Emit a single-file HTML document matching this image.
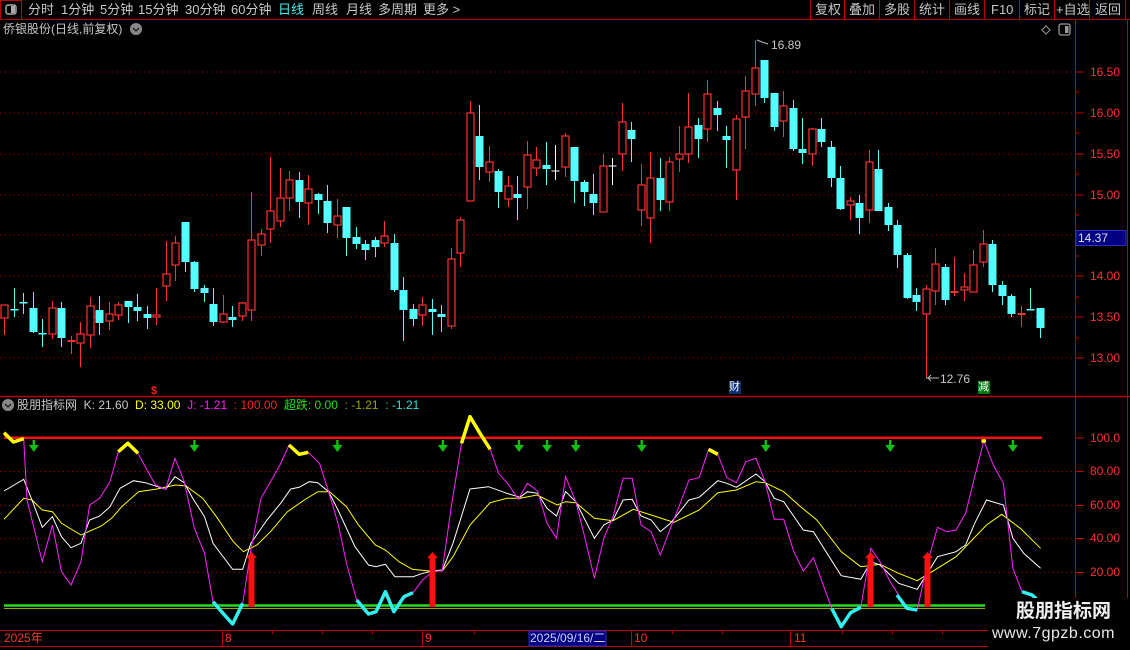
<!DOCTYPE html>
<html><head><meta charset="utf-8"><style>
html,body{margin:0;padding:0;background:#000;width:1130px;height:650px;overflow:hidden}
body{position:relative;font-family:"Liberation Sans","Noto Sans CJK SC",sans-serif}
.t{position:absolute;white-space:nowrap;font-size:13px;color:#c8c8c8;line-height:16px}
svg{position:absolute;left:0;top:0}
</style></head><body>
<svg id="s" width="1130" height="650" xmlns="http://www.w3.org/2000/svg">
<line x1="0" y1="19.5" x2="1130" y2="19.5" stroke="#c00000"/>
<rect x="0.5" y="0.5" width="21" height="19" fill="none" stroke="#c00000"/>
<rect x="6" y="5" width="10" height="9" rx="2" fill="none" stroke="#aaa" stroke-width="1.4"/>
<rect x="11" y="6" width="4" height="7" fill="#aaa"/>
<g stroke="#c00000">
<line x1="810.5" y1="0" x2="810.5" y2="19"/><line x1="844.5" y1="0" x2="844.5" y2="19"/><line x1="879.5" y1="0" x2="879.5" y2="19"/><line x1="914.5" y1="0" x2="914.5" y2="19"/><line x1="949.5" y1="0" x2="949.5" y2="19"/><line x1="984.5" y1="0" x2="984.5" y2="19"/><line x1="1019.5" y1="0" x2="1019.5" y2="19"/><line x1="1054.5" y1="0" x2="1054.5" y2="19"/><line x1="1089.5" y1="0" x2="1089.5" y2="19"/><line x1="1125.5" y1="0" x2="1125.5" y2="19"/>
</g>
<line x1="1075.5" y1="20" x2="1075.5" y2="630" stroke="#c00000"/>
<line x1="1127.5" y1="20" x2="1127.5" y2="630" stroke="#c00000"/>
<line x1="0" y1="396.5" x2="1130" y2="396.5" stroke="#c00000" stroke-width="1.5"/>
<g stroke="#c00000" stroke-dasharray="1,3.5">
<line x1="0" y1="72" x2="1075" y2="72"/><line x1="0" y1="113" x2="1075" y2="113"/><line x1="0" y1="154" x2="1075" y2="154"/><line x1="0" y1="195" x2="1075" y2="195"/><line x1="0" y1="235" x2="1075" y2="235"/><line x1="0" y1="276" x2="1075" y2="276"/><line x1="0" y1="317" x2="1075" y2="317"/><line x1="0" y1="358" x2="1075" y2="358"/>
<line x1="0" y1="471.5" x2="1075" y2="471.5"/><line x1="0" y1="505.5" x2="1075" y2="505.5"/><line x1="0" y1="538.5" x2="1075" y2="538.5"/><line x1="0" y1="572.5" x2="1075" y2="572.5"/>
</g>
<g stroke="#c00000">
<line x1="1075" y1="72" x2="1084" y2="72"/><line x1="1075" y1="113" x2="1084" y2="113"/><line x1="1075" y1="154" x2="1084" y2="154"/><line x1="1075" y1="195" x2="1084" y2="195"/><line x1="1075" y1="276" x2="1084" y2="276"/><line x1="1075" y1="317" x2="1084" y2="317"/><line x1="1075" y1="358" x2="1084" y2="358"/>
<line x1="1075" y1="92" x2="1079" y2="92"/><line x1="1075" y1="133" x2="1079" y2="133"/><line x1="1075" y1="174" x2="1079" y2="174"/><line x1="1075" y1="215" x2="1079" y2="215"/><line x1="1075" y1="256" x2="1079" y2="256"/><line x1="1075" y1="297" x2="1079" y2="297"/><line x1="1075" y1="338" x2="1079" y2="338"/>
<line x1="1075" y1="438" x2="1084" y2="438"/><line x1="1075" y1="471.5" x2="1084" y2="471.5"/><line x1="1075" y1="505.5" x2="1084" y2="505.5"/><line x1="1075" y1="538.5" x2="1084" y2="538.5"/><line x1="1075" y1="572.5" x2="1084" y2="572.5"/>
</g>
<rect x="1076" y="230.5" width="50" height="15" fill="#000080" stroke="#3030c0"/>
<line x1="0" y1="630.5" x2="1075" y2="630.5" stroke="#c00000"/>
<line x1="0" y1="646.5" x2="1075" y2="646.5" stroke="#c00000"/>
<g stroke="#c00000"><line x1="222.5" y1="630" x2="222.5" y2="646"/><line x1="422.5" y1="630" x2="422.5" y2="646"/><line x1="631.5" y1="630" x2="631.5" y2="646"/><line x1="790.5" y1="630" x2="790.5" y2="646"/>
<line x1="272.5" y1="630" x2="272.5" y2="634"/><line x1="322.5" y1="630" x2="322.5" y2="634"/><line x1="372.5" y1="630" x2="372.5" y2="634"/><line x1="474.5" y1="630" x2="474.5" y2="634"/><line x1="672.5" y1="630" x2="672.5" y2="634"/><line x1="722.5" y1="630" x2="722.5" y2="634"/><line x1="842.5" y1="630" x2="842.5" y2="634"/><line x1="892.5" y1="630" x2="892.5" y2="634"/><line x1="942.5" y1="630" x2="942.5" y2="634"/></g>
<rect x="529" y="631" width="77" height="15" fill="#000080" stroke="#3030c0"/>
<g id="candles"></g>
<polyline points="757,40 762,42 768,44" fill="none" stroke="#bbb"/>
<line x1="926" y1="378" x2="939" y2="378" stroke="#bbb"/>
<polyline points="931,375 928,378 931,381" fill="none" stroke="#bbb"/>
<text x="151" y="394" fill="#ff2020" font-size="11" font-weight="bold" font-family="Liberation Sans">$</text>
<rect x="729" y="381" width="12" height="13" fill="#0a3070"/>
<rect x="978" y="381" width="12" height="13" fill="#0a7a10"/>
<line x1="4" y1="437.7" x2="1042" y2="437.7" stroke="#ff1010" stroke-width="2.5"/>
<line x1="4" y1="605.5" x2="985" y2="605.5" stroke="#20e020" stroke-width="2.5"/>
<line x1="4" y1="608.5" x2="985" y2="608.5" stroke="#a0a000" stroke-width="1"/>
<polyline fill="none" stroke="#ffff00" stroke-width="1" points="4,519.3 23.7,498.3 32,500 42.3,510 52.4,511.7 61.5,523.3 81,535 101.4,526 111.6,518.3 121.7,506.7 138.6,491.7 155.5,489.3 175.8,485 186,486 202.8,498.3 216.4,516.7 233.3,541.7 243.4,551.7 257,545 270.5,531.7 287.4,511.7 304.3,500 317.8,491.7 329.6,491.7 346.5,506.7 358.4,525 375.3,545 385.4,550 399,561.7 412.4,569.3 429.3,571 443,570 453,556.7 470,525 490.2,502.7 507,498.3 520,498.3 537,495 557.2,505 565.6,501.7 575.8,502.7 594.4,518.3 613,520.7 633.3,509.3 651.2,515 673.8,522.3 699.2,510 717.8,492.7 736.4,490 756,481.7 765.1,482.7 783.7,491.7 800.6,506.7 816.8,520 841.2,551.7 860.8,566.7 880,564.3 898.6,573.3 917.2,580.7 937.5,568.3 956.1,556.7 986.5,525 1001.7,514.3 1020.3,528.3 1040.6,548.3"/>
<polyline fill="none" stroke="#ffffff" stroke-width="1" points="4,491 23.7,479.3 32,500 42.3,527.3 52.4,516.7 61.5,536.7 71,547.7 81,543.3 89.6,520 99.7,516 110,506.7 120,488.3 133.5,480.7 145.4,482.7 165.6,489.3 175,476.7 184.2,482.7 192.7,498.3 204.5,516.7 213,543.3 232.6,569.3 242.7,569.3 250.8,543.3 267,520 280.6,503.3 290.7,489 299.2,487.3 309.3,481.7 317.8,482.7 328.6,491.7 338,510 355,546.7 368.5,565 376,566.7 385.4,564.3 394.9,576.7 413,576.7 422.6,573.3 432.7,571 442.2,570.7 453,543.3 470,489 488.5,486.7 507,493.3 520,497.3 527.4,491.7 537.6,493.3 547,508.3 556.5,516 565.6,491.7 575.8,501.7 594.4,538.3 603.8,525 613,520 623.1,500 632.2,499.3 641,516 651.2,520 660.3,531.7 670.4,523.3 689,500 699.2,497.3 717.8,480.7 726.9,483.3 736.4,487.3 756,474 765.1,481.7 774.2,498.3 783.7,501.7 803.3,530 813.4,531.7 841.2,575.7 860.8,579.3 870.9,561.7 880,565 898.6,583.3 917.2,589.3 927.4,573.3 937.5,556.7 956.1,551.7 965.6,545 974.7,523.3 986.5,500 1003.4,505 1012.9,538.3 1023.7,553.3 1040.6,568.3"/>
<polyline fill="none" stroke="#ff20ff" stroke-width="1" points="4,432.7 13.5,442 23.7,438.7 27,500 42.3,561.7 52.4,525 61.5,571.7 71,585 81,561.7 89.6,505 99.7,498.3 110,481.7 118.3,451.7 127.8,443.3 138,453.3 147,470 155.5,485 165.6,489.3 175,458.3 184.2,481.7 194.4,528.3 204.5,553.3 213,601.7 223,613.3 232.6,624 242.7,603.3 250.8,550 261,498.3 270.5,481.7 280,465 289,445 299.2,454.3 308.3,452.3 319.5,463.3 328.6,491.7 338,523.3 346.5,563.3 356.7,600 368.5,614 376,611.7 385.4,591.7 393.9,611.7 404,596.7 413,592.7 422.6,580 432.7,571.7 442.2,570.7 451.3,506.7 461.5,443.3 470,416.7 480,433.3 490.2,449.3 498.6,473.3 508.8,485 518.3,499.3 527.4,483.3 537.6,491 547,523.3 556.5,538.3 565.6,476.7 575.8,501.7 584.2,535 594.4,578.3 603.8,538.3 613,516.7 623.1,478.3 632.2,478.3 641,525 651.2,531.7 660.3,555 670.4,528.3 678.9,506.7 689,480 699.2,477.7 708.6,449.3 717.8,454.3 726.9,477.7 736.4,482.7 745.8,461.7 756,458.3 765.1,481.7 774.2,519.3 783.7,519.3 793.8,551.7 803.3,571 813.4,557.7 822.6,583.3 831.7,608.3 841.2,626.7 850.6,612.7 860.8,607.3 870.9,548.3 880,561.7 890.2,581.7 898.6,595 907,608.3 917.2,610 927.4,563.3 937.5,527.3 946.6,531.7 956.1,530 965.6,513.3 974.7,476.7 983.8,440.7 993.3,465 1003.4,483.3 1012.9,568.3 1022,591.7 1032.2,595 1036.6,599.3"/>
<g fill="none" stroke="#ffff00" stroke-width="3.5" stroke-linejoin="round">
<polyline points="4,432.7 13.5,442 23.7,438.7"/><polyline points="118.3,451.7 127.8,443.3 138,453.3"/><polyline points="289,445 299.2,454.3 308.3,452.3"/><polyline points="461.5,443.3 470,416.7 480,433.3 490.2,449.3"/><polyline points="708.6,449.3 717.8,454.3"/><polyline points="981.5,441 986,441"/>
</g>
<g fill="none" stroke="#30f0f0" stroke-width="3.5" stroke-linejoin="round">
<polyline points="213,601.7 223,613.3 232.6,624 242.7,603.3"/><polyline points="356.7,600 368.5,614 376,611.7 385.4,591.7 393.9,611.7 404,596.7 413,592.7"/><polyline points="831.7,608.3 841.2,626.7 850.6,612.7 860.8,607.3"/><polyline points="897,595 907,608.3 917.2,610"/><polyline points="1022,591.7 1032.2,595 1036.6,599.3"/>
</g>
<g fill="#ff1010">
<rect x="248.5" y="557" width="6" height="50"/><polygon points="246,558 251.5,552 257,558"/>
<rect x="429.5" y="557" width="6" height="50"/><polygon points="427,558 432.5,552 438,558"/>
<rect x="867.5" y="557" width="6" height="50"/><polygon points="865,558 870.5,552 876,558"/>
<rect x="924.5" y="557" width="6" height="50"/><polygon points="922,558 927.5,552 933,558"/>
</g>
<g id="arrows" fill="#10c010"></g>
<polygon points="1046,26 1050,30 1046,34 1042,30" fill="none" stroke="#999"/>
<rect x="1059" y="24" width="11" height="11" rx="2" fill="none" stroke="#999" stroke-width="1.3"/>
<rect x="1065" y="26" width="3.5" height="7" fill="#999"/>
<circle cx="136" cy="29" r="6" fill="#888"/><polyline points="133,28 136,31 139,28" fill="none" stroke="#222" stroke-width="1.5"/>
<circle cx="8" cy="405" r="6" fill="#888"/><polyline points="5,404 8,407 11,404" fill="none" stroke="#222" stroke-width="1.5"/>
<rect x="988" y="598" width="142" height="52" fill="#000"/>
</svg>

<div class="t" style="left:28px;top:2px">分时</div>
<div class="t" style="left:61px;top:2px">1分钟</div>
<div class="t" style="left:100px;top:2px">5分钟</div>
<div class="t" style="left:138px;top:2px">15分钟</div>
<div class="t" style="left:185px;top:2px">30分钟</div>
<div class="t" style="left:231px;top:2px">60分钟</div>
<div class="t" style="left:278px;top:2px;color:#40f0f0">日线</div>
<div class="t" style="left:312px;top:2px">周线</div>
<div class="t" style="left:346px;top:2px">月线</div>
<div class="t" style="left:378px;top:2px">多周期</div>
<div class="t" style="left:423px;top:2px">更多 &gt;</div>
<div class="t" style="left:815px;top:2px">复权</div>
<div class="t" style="left:849px;top:2px">叠加</div>
<div class="t" style="left:884px;top:2px">多股</div>
<div class="t" style="left:919px;top:2px">统计</div>
<div class="t" style="left:954px;top:2px">画线</div>
<div class="t" style="left:991px;top:2px">F10</div>
<div class="t" style="left:1024px;top:2px">标记</div>
<div class="t" style="left:1056px;top:2px">+自选</div>
<div class="t" style="left:1095px;top:2px">返回</div>
<div class="t" style="left:3px;top:21px;font-size:12px">侨银股份(日线,前复权)</div>

<div class="t" style="left:1090px;top:64px;color:#ff3030;font-size:12px">16.50</div>
<div class="t" style="left:1090px;top:105px;color:#ff3030;font-size:12px">16.00</div>
<div class="t" style="left:1090px;top:146px;color:#ff3030;font-size:12px">15.50</div>
<div class="t" style="left:1090px;top:187px;color:#ff3030;font-size:12px">15.00</div>
<div class="t" style="left:1078px;top:230px;color:#e0e0ff;font-size:12px">14.37</div>
<div class="t" style="left:1090px;top:268px;color:#ff3030;font-size:12px">14.00</div>
<div class="t" style="left:1090px;top:309px;color:#ff3030;font-size:12px">13.50</div>
<div class="t" style="left:1090px;top:350px;color:#ff3030;font-size:12px">13.00</div>
<div class="t" style="left:1090px;top:430px;color:#ff3030;font-size:12px">100.0</div>
<div class="t" style="left:1090px;top:463px;color:#ff3030;font-size:12px">80.00</div>
<div class="t" style="left:1090px;top:497px;color:#ff3030;font-size:12px">60.00</div>
<div class="t" style="left:1090px;top:530px;color:#ff3030;font-size:12px">40.00</div>
<div class="t" style="left:1090px;top:564px;color:#ff3030;font-size:12px">20.00</div>

<div class="t" style="left:771px;top:37px;color:#c8c8c8;font-size:12px">16.89</div>
<div class="t" style="left:940px;top:371px;color:#c8c8c8;font-size:12px">12.76</div>
<div class="t" style="left:729px;top:379px;color:#fff;font-size:11px">财</div>
<div class="t" style="left:978px;top:379px;color:#fff;font-size:11px">减</div>

<div class="t" style="left:17px;top:397px;font-size:12px">股朋指标网&nbsp; K: 21.60 <span style="color:#ffff00">&nbsp;D: 33.00</span> <span style="color:#ff20ff">&nbsp;J: -1.21</span> <span style="color:#ff2020">&nbsp;: 100.00</span> <span style="color:#20e020">&nbsp;超跌: 0.00</span> <span style="color:#a0a000">&nbsp;: -1.21</span> <span style="color:#30e0e0">&nbsp;: -1.21</span></div>

<div class="t" style="left:4px;top:630px;color:#ff3030;font-size:12px">2025年</div>
<div class="t" style="left:225px;top:630px;color:#ff3030;font-size:12px">8</div>
<div class="t" style="left:425px;top:630px;color:#ff3030;font-size:12px">9</div>
<div class="t" style="left:530px;top:630px;color:#d0d0ff;font-size:12px">2025/09/16/二</div>
<div class="t" style="left:634px;top:630px;color:#ff3030;font-size:12px">10</div>
<div class="t" style="left:794px;top:630px;color:#ff3030;font-size:12px">11</div>

<div class="t" style="left:1016px;top:600px;color:#f0f0f0;font-size:19px;font-weight:bold;line-height:24px">股朋指标网</div>
<div class="t" style="left:992px;top:624px;color:#e8e8e8;font-size:16px;line-height:20px;letter-spacing:0.5px">www.7gpzb.com</div>

<script>
var D=[["r",305,318,305,335],["c",309,310,288,317],["c",302,303,293,314],["c",308,332,292,333],["c",333,334,319,347],["r",308,334,301,339],["c",308,338,302,347],["f",340,341,336,354],["r",334,343,322,367],["r",306,335,297,348],["c",310,323,296,335],["r",314,321,302,330],["r",305,315,302,320],["c",301,307,301,323],["c",307,311,294,321],["c",314,318,306,329],["r",315,317,288,325],["r",274,286,241,301],["r",243,265,236,281],["c",222,262,222,272],["c",262,289,261,292],["c",288,293,285,302],["c",304,322,288,326],["r",314,322,295,323],["c",317,320,306,327],["r",303,316,302,321],["r",240,310,192,321],["r",234,245,229,256],["r",211,229,157,243],["r",198,221,168,227],["r",180,198,171,211],["c",180,202,172,218],["r",189,203,175,225],["c",194,200,193,214],["c",201,223,185,233],["r",216,225,199,238],["c",207,238,207,256],["c",237,244,227,249],["c",244,250,240,260],["c",240,247,237,257],["r",236,243,221,247],["c",243,290,234,292],["c",290,310,277,341],["c",309,319,304,326],["r",305,315,297,326],["c",309,312,299,335],["c",314,317,305,332],["r",259,326,248,329],["r",220,253,217,267],["r",113,201,101,201],["c",136,167,105,180],["r",162,172,146,182],["c",171,192,169,208],["r",186,199,176,207],["c",194,198,176,220],["r",155,187,141,209],["r",160,168,147,176],["c",165,169,142,185],["w",171,171,145,180],["r",136,167,133,177],["c",147,181,147,203],["c",182,192,180,206],["c",194,203,174,215],["r",166,212,154,212],["w",166,166,158,185],["r",122,154,103,171],["c",130,139,122,162],["r",185,210,164,226],["r",178,218,152,243],["c",178,200,158,211],["r",162,202,157,211],["r",154,159,126,172],["r",127,154,93,163],["c",125,139,118,158],["r",94,129,80,142],["c",108,115,101,131],["c",136,140,126,168],["r",119,170,115,200],["r",91,117,76,149],["r",68,94,40,106],["c",60,98,60,103],["c",93,127,93,131],["r",106,121,91,137],["c",108,149,100,151],["c",149,153,118,164],["r",129,154,128,166],["c",129,142,118,147],["c",147,178,141,187],["c",178,209,166,210],["r",201,205,197,220],["c",203,218,195,234],["r",162,210,150,223],["c",169,211,150,211],["c",207,225,203,231],["c",225,255,220,268],["c",255,298,253,299],["c",295,302,288,311],["r",289,314,285,378],["r",264,291,248,305],["c",267,300,264,305],["f",291,293,257,296],["r",287,290,273,301],["r",265,292,250,292],["r",244,262,230,267],["c",244,285,240,292],["c",285,296,281,305],["c",296,314,294,317],["f",313,315,306,327],["c",309,310,288,310],["c",308,328,308,338]];
var g=document.getElementById("candles"),h="";
D.forEach(function(d,i){var x=Math.round(4.3+i*9.5)+0.5,t=d[0],a=d[1],b=d[2],hi=d[3],lo=d[4];
var col=t=="c"?"#54ffff":(t=="w"?"#ffffff":"#ff3030");
h+='<line x1="'+x+'" y1="'+hi+'" x2="'+x+'" y2="'+lo+'" stroke="'+col+'"/>';
if(t=="r"){h+='<rect x="'+(x-3.5)+'" y="'+a+'" width="7" height="'+Math.max(1,b-a)+'" fill="#000" stroke="'+col+'" stroke-width="1.2"/>';}
else if(t=="c"){h+='<rect x="'+(x-4)+'" y="'+a+'" width="8" height="'+Math.max(1.5,b-a)+'" fill="'+col+'"/>';}
else if(t=="f"){h+='<rect x="'+(x-4)+'" y="'+a+'" width="8" height="'+Math.max(2,b-a)+'" fill="'+col+'"/>';}
else{h+='<line x1="'+(x-4)+'" y1="'+a+'" x2="'+(x+4)+'" y2="'+a+'" stroke="'+col+'"/>';}
});
g.innerHTML=h;
var A=[33.8,194.4,337.4,442.9,519,547,575.8,641.7,765.8,890.2,1012.9],s="";
A.forEach(function(x){s+='<rect x="'+(x-1.2)+'" y="440" width="2.4" height="7"/><polygon points="'+(x-5)+',445 '+(x+5)+',445 '+x+',452"/>';});
document.getElementById("arrows").innerHTML=s;
</script>
</body></html>
